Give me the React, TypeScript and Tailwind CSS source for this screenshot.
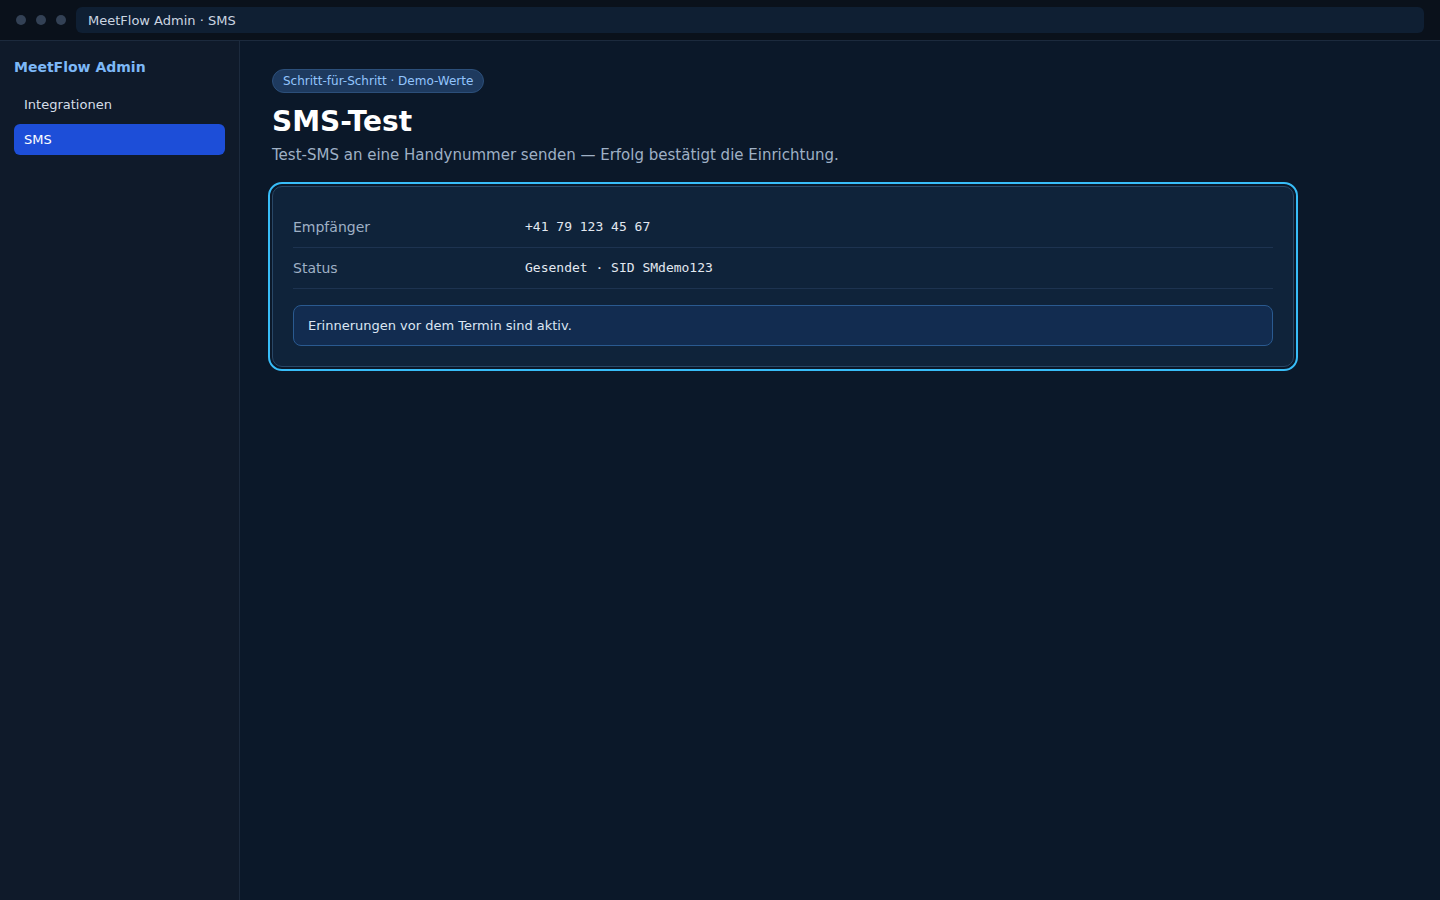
import React from "react";

const sans = { fontFamily: '"DejaVu Sans", "Noto Sans", sans-serif' };
const mono = { fontFamily: '"DejaVu Sans Mono", monospace' };

export default function App() {
  return (
    <div className="flex h-[900px] w-[1440px] flex-col bg-[#0b1829] text-white" style={sans}>
      {/* window chrome */}
      <div className="flex h-[41px] shrink-0 items-center gap-[10px] border-b border-[#1c2a3d] bg-[#0a111b] pl-4 pr-4">
        <div className="flex items-center gap-[10px]">
          <span className="h-[10px] w-[10px] rounded-full bg-[#334155]" />
          <span className="h-[10px] w-[10px] rounded-full bg-[#334155]" />
          <span className="h-[10px] w-[10px] rounded-full bg-[#334155]" />
        </div>
        <div className="flex h-[26px] flex-1 items-center rounded-md bg-[#0f1f33] px-3 pt-px text-[13px] text-[#cbd5e1]">
          MeetFlow Admin · SMS
        </div>
      </div>

      <div className="flex flex-1">
        {/* sidebar */}
        <aside className="w-[240px] shrink-0 border-r border-[#1c2a3d] bg-[#0f1a2a] px-[14px] pt-[16px]">
          <div className="text-[14px] font-bold text-[#7db8f7]">MeetFlow Admin</div>
          <nav className="mt-[11px] flex flex-col gap-[4px]">
            <div className="flex h-[31px] items-center rounded-md px-[10px] text-[13px] text-[#d5dde8]">
              Integrationen
            </div>
            <div className="flex h-[31px] items-center rounded-md bg-[#1d4ed8] px-[10px] text-[13px] text-white">
              SMS
            </div>
          </nav>
        </aside>

        {/* main */}
        <main className="flex-1 pl-[32px] pr-[146px] pt-[27px]">
          <span className="inline-flex h-[24px] items-center rounded-full border border-[#2c4f7a] bg-[#1e3a5f] px-[10px] text-[12px] text-[#93c5fd]">
            Schritt-für-Schritt · Demo-Werte
          </span>
          <h1 className="mt-[11px] text-[28px] font-bold leading-[36px] text-white">SMS-Test</h1>
          <p className="mt-[4px] text-[15px] leading-[22px] text-[#9fb0c5]">
            Test-SMS an eine Handynummer senden — Erfolg bestätigt die Einrichtung.
          </p>

          <section className="mt-[20px] rounded-[10px] border border-[#294766] bg-[#0f233a] px-[20px] pb-[20px] pt-[20px] outline-2 outline-offset-2 outline-[#38bdf8]">
            <div className="flex h-[41px] items-center border-b border-[#1d3350]">
              <div className="w-[232px] text-[14px] text-[#9fb0c5]">Empfänger</div>
              <div className="text-[13px] text-[#e2e8f0]" style={mono}>
                +41 79 123 45 67
              </div>
            </div>
            <div className="flex h-[41px] items-center border-b border-[#1d3350]">
              <div className="w-[232px] text-[14px] text-[#9fb0c5]">Status</div>
              <div className="text-[13px] text-[#e2e8f0]" style={mono}>
                Gesendet · SID SMdemo123
              </div>
            </div>
            <div className="mt-[16px] flex h-[41px] items-center rounded-lg border border-[#2a5a90] bg-[#122c50] px-[14px] text-[13px] text-[#dbe6f3]">
              Erinnerungen vor dem Termin sind aktiv.
            </div>
          </section>
        </main>
      </div>
    </div>
  );
}
